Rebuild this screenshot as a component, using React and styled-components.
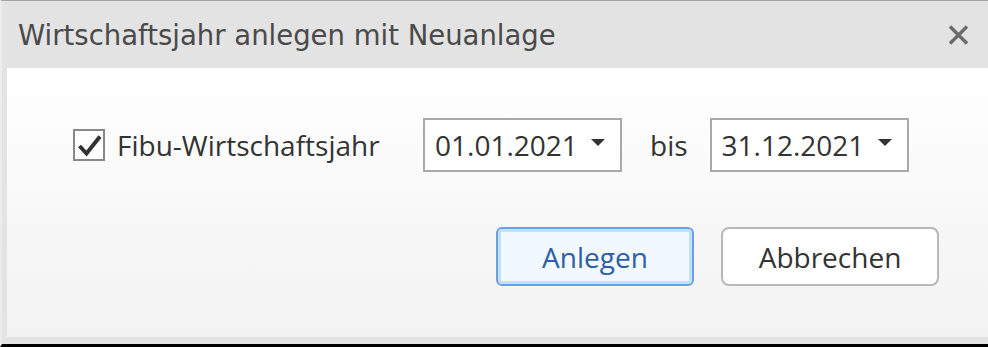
import styled, { createGlobalStyle } from "styled-components";

const GlobalStyle = createGlobalStyle`
  html, body {
    margin: 0;
    padding: 0;
    background: #ffffff;
    overflow: hidden;
  }
  * {
    box-sizing: border-box;
  }
`;

const Window = styled.div`
  width: 988px;
  height: 347px;
  display: flex;
  flex-direction: column;
  background: #e3e3e3;
  border-top: 1px solid #a3a3a3;
  border-left: 2px solid #ececec;
  border-bottom: 3px solid #000000;
  padding: 0 0 7px 5px;
`;

const TitleBar = styled.div`
  height: 67px;
  flex: none;
  display: flex;
  align-items: center;
  justify-content: space-between;
  padding: 0 19px 0 11px;
`;

const Title = styled.div`
  font-family: "DejaVu Sans", "Liberation Sans", sans-serif;
  font-size: 27.5px;
  color: #4a4a4a;
`;

const CloseButton = styled.button`
  all: unset;
  cursor: pointer;
  width: 21px;
  height: 20px;
  display: flex;
`;

const Body = styled.div`
  flex: 1;
  display: flex;
  flex-direction: column;
  background: linear-gradient(#ffffff, #f2f2f2);
  padding: 50px 49px 0 66px;
  font-family: "Open Sans", "Noto Sans", sans-serif;
  font-size: 28px;
  color: #333333;
`;

const FormRow = styled.div`
  display: flex;
  align-items: center;
  height: 54px;
`;

const CheckLabel = styled.label`
  display: flex;
  align-items: center;
  gap: 12px;
  width: 350px;
  cursor: pointer;
`;

const CheckBox = styled.span`
  width: 32px;
  height: 32px;
  flex: none;
  display: flex;
  align-items: center;
  justify-content: center;
  border: 2px solid #888888;
  background: #ffffff;
`;

const DateBox = styled.div`
  width: 199px;
  height: 54px;
  display: flex;
  align-items: center;
  justify-content: space-between;
  border: 2px solid #a9a9a9;
  background: #ffffff;
  padding: 0 15px 0 10px;
`;

const Caret = styled.span`
  width: 0;
  height: 0;
  border-left: 7px solid transparent;
  border-right: 7px solid transparent;
  border-top: 7px solid #333333;
  margin-top: -6px;
`;

const Between = styled.span`
  margin: 0 22px 0 28px;
`;

const ButtonRow = styled.div`
  display: flex;
  justify-content: flex-end;
  gap: 27px;
  margin-top: 55px;
`;

const Button = styled.button`
  all: unset;
  cursor: pointer;
  height: 59px;
  width: ${(p) => p.$width}px;
  display: flex;
  align-items: center;
  justify-content: center;
  font-family: "Open Sans", "Noto Sans", sans-serif;
  font-size: 28px;
  color: ${(p) => (p.$primary ? "#2d5fa6" : "#333333")};
  background: ${(p) => (p.$primary ? "#f1f8ff" : "#ffffff")};
  border: 2px solid ${(p) => (p.$primary ? "#6ca0e2" : "#b8b8b8")};
  border-radius: ${(p) => (p.$primary ? 6 : 8)}px;
  box-shadow: ${(p) => (p.$primary ? "inset 0 0 0 3px #c0e1fa" : "none")};
  box-sizing: border-box;
`;

export default function App() {
  return (
    <>
      <GlobalStyle />
      <Window>
        <TitleBar>
          <Title>Wirtschaftsjahr anlegen mit Neuanlage</Title>
          <CloseButton aria-label="Schließen">
            <svg width="21" height="20" viewBox="0 0 21 20">
              <path d="M2 1.5 L19 18.5 M19 1.5 L2 18.5" stroke="#6b6b6b" strokeWidth="3.4" fill="none" />
            </svg>
          </CloseButton>
        </TitleBar>
        <Body>
          <FormRow>
            <CheckLabel>
              <CheckBox>
                <svg width="25" height="23" viewBox="0 0 25 23">
                  <path d="M2.5 12 L9.5 19.5 L23 2.5" stroke="#333333" strokeWidth="4" fill="none" />
                </svg>
              </CheckBox>
              Fibu-Wirtschaftsjahr
            </CheckLabel>
            <DateBox>
              01.01.2021
              <Caret />
            </DateBox>
            <Between>bis</Between>
            <DateBox>
              31.12.2021
              <Caret />
            </DateBox>
          </FormRow>
          <ButtonRow>
            <Button $primary $width={198}>Anlegen</Button>
            <Button $width={218}>Abbrechen</Button>
          </ButtonRow>
        </Body>
      </Window>
    </>
  );
}
